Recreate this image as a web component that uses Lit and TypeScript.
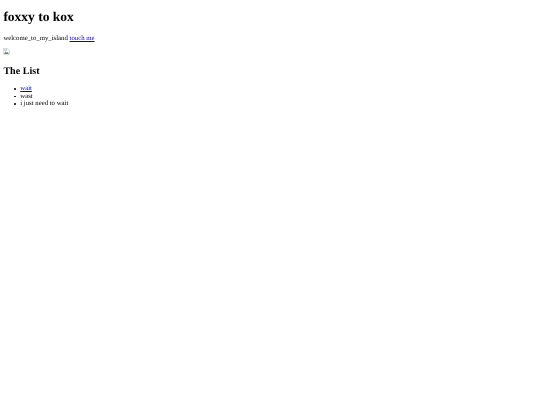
import { LitElement, html, css } from "lit";
import { customElement } from "lit/decorators.js";

@customElement("app-root")
export class AppRoot extends LitElement {
  static styles = css`
    :host {
      display: block;
      margin: 0 3.375px;
      font-family: "Liberation Serif", "Times New Roman", serif;
      font-size: 6.75px;
      line-height: 7.6px;
      color: #000;
      text-rendering: geometricPrecision;
      filter: blur(0.3px);
    }
    h1 { font-size: 13.5px; line-height: 15.6px; font-weight: bold; margin: 8.8px 0 10.2px; }
    h2 { font-size: 10.125px; line-height: 11.6px; font-weight: bold; margin: 10.9px 0 7.4px; }
    p { margin: 6.25px 0; }
    ul { margin: 7.4px 0; padding: 0 0 0 10.5px; list-style: none; }
    li { display: flex; align-items: center; gap: 4.6px; }
    li::before { content: ""; width: 1.8px; height: 1.8px; border-radius: 50%; background: #000; flex: none; }
    a { color: #00e; text-decoration: underline; }
    .broken { display: block; width: 6.75px; height: 6.75px; }
  `;

  render() {
    return html`
      <h1>foxxy to kox</h1>
      <p>welcome_to_my_island <a href="#">touch me</a></p>
      <p>
        <svg class="broken" viewBox="0 0 16 16">
          <path d="M1 1h10l4 4v10H1z" fill="#fff" stroke="#a8a8a8" />
          <path d="M2 2h8v5H2z" fill="#c4d8f2" />
          <path d="M2 14l4-6 3 3 2-2 3 5z" fill="#5a9e4b" />
        </svg>
      </p>
      <h2>The List</h2>
      <ul>
        <li><a href="#">wait</a></li>
        <li>wast</li>
        <li>i just need to wait</li>
      </ul>
    `;
  }
}
